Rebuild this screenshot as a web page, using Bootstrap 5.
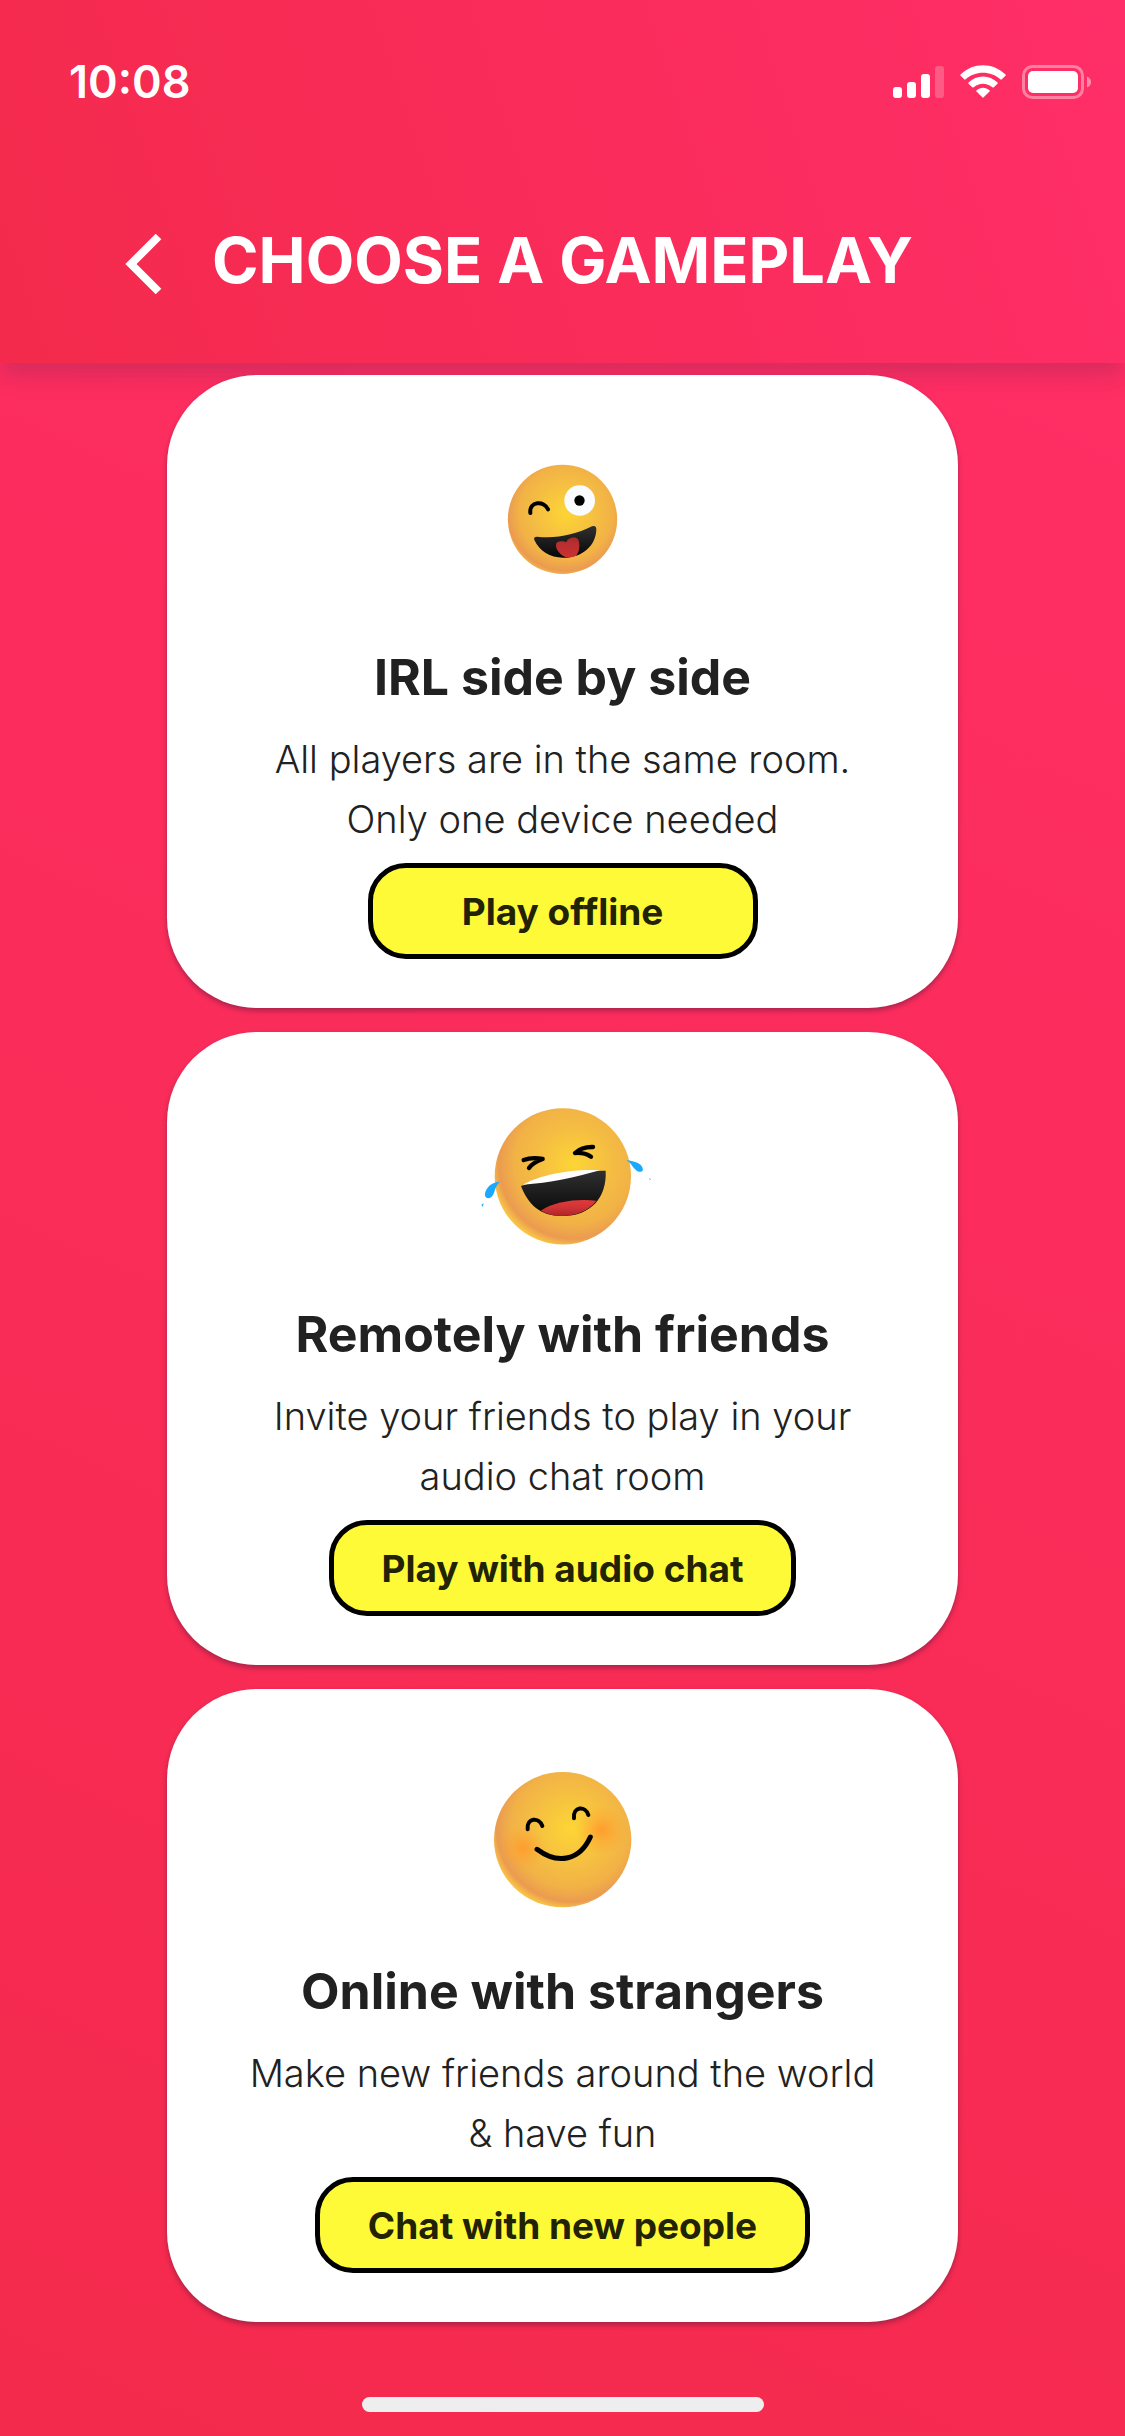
<!DOCTYPE html>
<html lang="en">
<head>
<meta charset="utf-8">
<meta name="viewport" content="width=device-width, initial-scale=1">
<title>Choose a gameplay</title>
<link href="https://cdn.jsdelivr.net/npm/bootstrap@5.3.0/dist/css/bootstrap.min.css" rel="stylesheet">
<style>
  body { font-family: Inter, "Liberation Sans", sans-serif; color: #212121; background: #f42a4c; }
  .app-header {
    z-index: 1; color: #fff; padding: 52px 34px 63px 69px;
    background: linear-gradient(72deg, #f42a4c, #ff2e68);
    box-shadow: 0 14px 18px -4px rgba(33, 33, 80, .14), 0 12px 34px 0 rgba(33, 33, 80, .05);
  }
  .clock { font-size: 45px; line-height: 60px; font-weight: 600; }
  .title-bar { margin: 108px -34px 0 -69px; }
  .title-side { flex: 1 1 0; }
  .back-btn { margin-left: 118px; width: 52px; height: 80px; }
  .page-title { font-size: 63px; line-height: 80px; font-weight: 700; }
  .app-main { background: linear-gradient(25deg, #f42a4c, #ff2e64); padding: 12px 16px 24px; }
  .mode-list { max-width: 791px; gap: 24px; }
  .mode-card {
    z-index: 2; border: 0; border-radius: 90px; padding: 44px 24px 49px; color: inherit;
    box-shadow: 0 3px 5px rgba(40, 20, 50, .36);
  }
  .mode-title { font-size: 50px; line-height: 60px; font-weight: 700; margin: 28px 0 22px; }
  .mode-text { font-size: 38px; line-height: 60px; font-weight: 300; max-width: 660px; margin-bottom: 14px; }
  .mode-btn {
    --bs-btn-color: #222205; --bs-btn-bg: #fffa37; --bs-btn-border-color: #000;
    --bs-btn-hover-color: #222205; --bs-btn-hover-bg: #f5ef20; --bs-btn-hover-border-color: #000;
    --bs-btn-border-width: 5px; --bs-btn-border-radius: 38px;
    --bs-btn-font-size: 37px; --bs-btn-font-weight: 700; --bs-btn-line-height: 60px;
    --bs-btn-padding-x: 48px;
    min-width: 390px; padding-top: 14px; padding-bottom: 12px;
  }
  .home-bar { width: 402px; height: 15px; background: #eee; margin-top: 75px; }
</style>
</head>
<body>
<div class="d-flex flex-column min-vh-100">
  <header class="app-header position-relative">
    <div class="d-flex justify-content-between align-items-center">
      <span class="clock">10:08</span>
      <svg width="198" height="34" viewBox="893 65 198 34" fill="#fff" role="img" aria-label="Signal, Wi-Fi and battery">
        <rect x="893" y="87" width="9" height="11" rx="3"/>
        <rect x="907" y="82" width="9" height="16" rx="3"/>
        <rect x="921" y="74" width="9" height="24" rx="3"/>
        <rect x="935" y="66" width="9" height="32" rx="3" opacity=".22"/>
        <path d="M960.500 74.500C973 62 993 62 1005.500 74.500Q1006 75 1005.500 75.700L1001.500 79.500Q1001 79.900 1000.300 79.300C991 70.500 975 70.500 965.700 79.300Q965 79.900 964.500 79.500L960.500 75.700Q960 75 960.500 74.500Z"/>
        <path d="M968.500 82.500C976.500 74.500 989.500 74.500 997.500 82.500Q998 83 997.500 83.700L993.500 87.500Q993 87.800 992.300 87.300C987 82.500 979 82.500 973.700 87.300Q973 87.800 972.500 87.500L968.500 83.700Q968 83 968.500 82.500Z"/>
        <path d="M976.500 90.300C980.500 86.800 985.500 86.800 989.500 90.300Q990 90.900 989.500 91.500L983.700 97.300Q983 98 982.300 97.300L976.500 91.500Q976 90.900 976.500 90.300Z"/>
        <rect x="1023.500" y="66.500" width="59" height="31" rx="9" fill="none" stroke="#fff" stroke-width="3" opacity=".4"/>
        <rect x="1028" y="71" width="50" height="22" rx="5"/>
        <path d="M1087 76.500Q1091 78 1091 82T1087 87.500Z" opacity=".45"/>
      </svg>
    </div>
    <div class="title-bar d-flex align-items-center">
      <div class="title-side">
        <button type="button" class="back-btn btn p-0 border-0 d-block" aria-label="Back">
          <svg class="d-block" width="52" height="80" viewBox="118 220 52 80" fill="none" stroke="#fff" stroke-width="8"><path d="M158.500 236.500L131 264L158.500 291.500"/></svg>
        </button>
      </div>
      <h1 class="page-title m-0 text-nowrap">CHOOSE A GAMEPLAY</h1>
      <div class="title-side"></div>
    </div>
  </header>

  <main class="app-main flex-grow-1 d-flex flex-column align-items-center">
    <div class="mode-list w-100 d-flex flex-column">

      <section class="mode-card card position-relative align-items-center text-center">
        <svg width="200" height="200" viewBox="-51 -63 600 600" aria-hidden="true">
          <defs>
            <radialGradient id="faceA" cx=".53" cy=".44" r=".61">
              <stop offset="0" stop-color="#fdd535"/><stop offset=".5" stop-color="#f4bc43"/><stop offset=".7" stop-color="#f2b246"/><stop offset=".87" stop-color="#eb9b50"/><stop offset="1" stop-color="#fccb40"/>
            </radialGradient>
            <linearGradient id="mouth" x1="0" y1="0" x2="0" y2="1"><stop offset="0" stop-color="#303030"/><stop offset="1" stop-color="#070707"/></linearGradient>
            <linearGradient id="tongueA" x1="0" y1="0" x2="0" y2="1"><stop offset="0" stop-color="#a92a2b"/><stop offset=".3" stop-color="#b72f30"/><stop offset="1" stop-color="#cb3031"/></linearGradient>
          </defs>
          <circle cx="247.500" cy="238" r="164" fill="url(#faceA)"/>
          <path d="M151 219C147 183 193 181 204 208" fill="none" stroke="#000" stroke-width="12" stroke-linecap="round"/>
          <circle cx="299" cy="181.500" r="46" fill="#fafbfe"/>
          <circle cx="298.500" cy="181.500" r="15.500" fill="#000"/>
          <path d="M171 290C230 296 284 285 336 259Q349 254 349 269C347 320 303 354 249 353C210 353 179 334 163 300Q160 290 171 290Z" fill="url(#mouth)"/>
          <path d="M229 310C235 302 250 303 259 307C262 294 287 287 295 299C301 315 298 337 288 347Q276 354 258 352C240 347 223 323 229 310Z" fill="url(#tongueA)"/>
        </svg>
        <h2 class="mode-title">IRL side by side</h2>
        <p class="mode-text">All players are in the same room.<br>Only one device needed</p>
        <button type="button" class="mode-btn btn">Play offline</button>
      </section>

      <section class="mode-card card position-relative align-items-center text-center">
        <svg width="200" height="200" viewBox="9 -12 600 600" aria-hidden="true">
          <defs>
            <radialGradient id="faceB" cx=".58" cy=".41" r=".64">
              <stop offset="0" stop-color="#fdd535"/><stop offset=".45" stop-color="#f4bc43"/><stop offset=".68" stop-color="#f2b246"/><stop offset=".86" stop-color="#eb9b50"/><stop offset="1" stop-color="#ffd840"/>
            </radialGradient>
            <linearGradient id="tongueB" x1="0" y1="0" x2="0" y2="1"><stop offset="0" stop-color="#e13a3c"/><stop offset=".5" stop-color="#cf3235"/><stop offset="1" stop-color="#ad2527"/></linearGradient>
          </defs>
          <circle cx="308.500" cy="289" r="204.500" fill="url(#faceB)"/>
          <g fill="none" stroke="#000" stroke-width="13" stroke-linecap="round" stroke-linejoin="round">
            <path d="M191 240Q216 231 248 237Q218 248 207 264"/>
            <path d="M399 201Q366 200 345 219Q374 217 393 230"/>
          </g>
          <path d="M183 318C260 293 340 271 437 272C441 350 395 408 305 408C240 408 205 374 183 318Z" fill="url(#mouth)"/>
          <path d="M189 314C245 282 345 266 420 271C345 292 270 310 189 314Z" fill="#fff"/>
          <path d="M242 392C285 364 350 356 409 362C370 413 290 419 242 392Z" fill="url(#tongueB)"/>
          <g fill="#19a9ff">
            <path d="M119 305C88 306 72 333 75 348Q82 361 95 350C106 339 101 325 119 305Z"/>
            <path d="M64 374L71 370L68 381Z"/>
            <path d="M499 241C525 243 548 251 549 270Q544 280 530 272C516 262 516 250 499 241Z"/>
            <path d="M567 294L573 298L570 300Z"/>
          </g>
        </svg>
        <h2 class="mode-title">Remotely with friends</h2>
        <p class="mode-text">Invite your friends to play in your<br>audio chat room</p>
        <button type="button" class="mode-btn btn">Play with audio chat</button>
      </section>

      <section class="mode-card card position-relative align-items-center text-center">
        <svg width="200" height="200" viewBox="-21 -51 600 600" aria-hidden="true">
          <defs>
            <radialGradient id="faceC" cx=".56" cy=".42" r=".62">
              <stop offset="0" stop-color="#fdd535"/><stop offset=".5" stop-color="#f4bc43"/><stop offset=".7" stop-color="#f2b246"/><stop offset=".87" stop-color="#eb9b50"/><stop offset="1" stop-color="#ffd840"/>
            </radialGradient>
            <radialGradient id="blush"><stop offset="0" stop-color="#ff9d2e"/><stop offset=".5" stop-color="#ff9d2e" stop-opacity=".4"/><stop offset="1" stop-color="#ff9d2e" stop-opacity="0"/></radialGradient>
          </defs>
          <ellipse cx="278" cy="269" rx="206" ry="203" fill="url(#faceC)"/>
          <circle cx="160" cy="294" r="66" fill="url(#blush)"/>
          <circle cx="396" cy="240" r="76" fill="url(#blush)"/>
          <g fill="none" stroke="#000" stroke-linecap="round">
            <path d="M173 238C169 203 207 200 217 228" stroke-width="12"/>
            <path d="M312 205C308 168 347 167 355 195" stroke-width="12"/>
            <path d="M201 298C265 346 330 330 361 261" stroke-width="15"/>
          </g>
        </svg>
        <h2 class="mode-title">Online with strangers</h2>
        <p class="mode-text">Make new friends around the world<br>&amp; have fun</p>
        <button type="button" class="mode-btn btn">Chat with new people</button>
      </section>

    </div>
    <div class="home-bar rounded-pill"></div>
  </main>
</div>
<script src="https://cdn.jsdelivr.net/npm/bootstrap@5.3.0/dist/js/bootstrap.bundle.min.js"></script>
</body>
</html>
